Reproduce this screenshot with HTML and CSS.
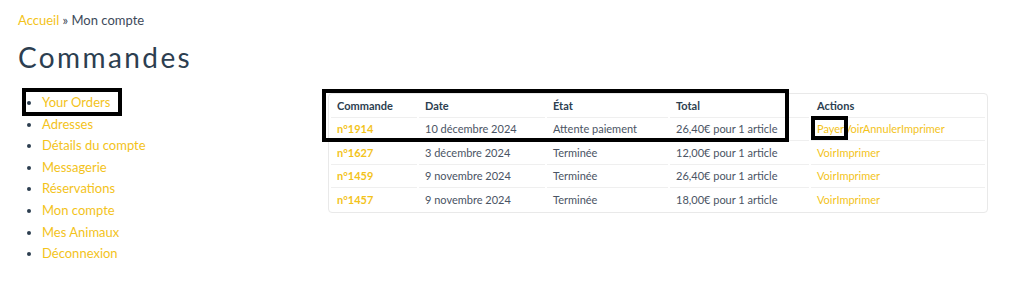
FILE: index.html
```html
<!DOCTYPE html>
<html lang="fr">
<head>
<meta charset="utf-8">
<title>Commandes</title>
<link rel="stylesheet" href="styles.css">
</head>
<body>
<div class="page">
  <div class="breadcrumb"><a href="#">Accueil</a> » Mon compte</div>
  <h1 class="title">Commandes</h1>
  <div class="content">
    <nav class="sidebar">
      <ul class="menu">
        <li class="menu-item active"><a href="#">Your Orders</a><span class="mark mark-orders"></span></li>
        <li class="menu-item"><a href="#">Adresses</a></li>
        <li class="menu-item"><a href="#">Détails du compte</a></li>
        <li class="menu-item"><a href="#">Messagerie</a></li>
        <li class="menu-item"><a href="#">Réservations</a></li>
        <li class="menu-item"><a href="#">Mon compte</a></li>
        <li class="menu-item"><a href="#">Mes Animaux</a></li>
        <li class="menu-item"><a href="#">Déconnexion</a></li>
      </ul>
    </nav>
    <main class="main">
      <div class="table-wrap">
        <table class="orders">
          <thead>
            <tr>
              <th class="c-num">Commande</th>
              <th class="c-date">Date</th>
              <th class="c-state">État</th>
              <th class="c-total">Total</th>
              <th class="c-actions">Actions</th>
            </tr>
          </thead>
          <tbody>
            <tr>
              <td><a class="num" href="#">n°1914</a></td>
              <td>10 décembre 2024</td>
              <td>Attente paiement</td>
              <td>26,40€ pour 1 article</td>
              <td class="actions"><a href="#">Payer</a><a href="#">Voir</a><a href="#">Annuler</a><a href="#">Imprimer</a></td>
            </tr>
            <tr>
              <td><a class="num" href="#">n°1627</a></td>
              <td>3 décembre 2024</td>
              <td>Terminée</td>
              <td>12,00€ pour 1 article</td>
              <td class="actions"><a href="#">Voir</a><a href="#">Imprimer</a></td>
            </tr>
            <tr>
              <td><a class="num" href="#">n°1459</a></td>
              <td>9 novembre 2024</td>
              <td>Terminée</td>
              <td>26,40€ pour 1 article</td>
              <td class="actions"><a href="#">Voir</a><a href="#">Imprimer</a></td>
            </tr>
            <tr>
              <td><a class="num" href="#">n°1457</a></td>
              <td>9 novembre 2024</td>
              <td>Terminée</td>
              <td>18,00€ pour 1 article</td>
              <td class="actions"><a href="#">Voir</a><a href="#">Imprimer</a></td>
            </tr>
          </tbody>
        </table>
        <span class="mark mark-row"></span>
        <span class="mark mark-pay"></span>
      </div>
    </main>
  </div>
</div>
</body>
</html>
```

FILE: styles.css
```css
* { box-sizing: border-box; }
html, body { margin: 0; padding: 0; background: #ffffff; }
body {
  font-family: Lato, "Noto Sans", "Liberation Sans", sans-serif;
  color: #2c3e50;
  font-size: 13px;
}
a { color: #f3c31b; text-decoration: none; }

.page { padding: 12px 18px 0 18px; }

.breadcrumb {
  line-height: 16px;
  font-size: 13px;
  color: #3d4a5a;
}

.title {
  margin: 11px 0 0 0;
  font-size: 28px;
  line-height: 36px;
  letter-spacing: 2.4px;
  font-weight: 400;
  color: #2c3e50;
}

.content {
  display: flex;
  margin-top: 15px;
}

.sidebar { width: 310px; flex: none; }

.menu {
  margin: 2px 0 0 0;
  padding: 0 0 0 24px;
  list-style: disc;
  color: #2c3e50;
}
.menu-item {
  line-height: 21.6px;
  font-size: 13px;
  position: relative;
}

.main { width: 660px; flex: none; padding-top: 3px; }

.table-wrap { position: relative; }

.orders {
  width: 660px;
  border: 1px solid #e9e9e9;
  border-radius: 4px;
  border-collapse: separate;
  border-spacing: 2px 0;
  table-layout: fixed;
  font-size: 11px;
  color: #4a5464;
}
.orders th, .orders td {
  text-align: left;
  height: 23.5px;
  padding: 0 0 0 6px;
  border-bottom: 1px solid #efefef;
  white-space: nowrap;
  vertical-align: middle;
}
.orders tbody tr:last-child td { border-bottom: none; }
.orders th { font-weight: 700; color: #2c3e50; }
.c-num { width: 86px; }
.c-date { width: 126px; }
.c-state { width: 121px; }
.c-total { width: 139px; }
.c-actions { width: auto; }

.num { font-weight: 700; }

.mark {
  position: absolute;
  border: 4px solid #000000;
  pointer-events: none;
}
.mark-orders { left: -20px; top: -4px; width: 100px; height: 28px; }
.mark-row { left: -6px; top: -4px; width: 467px; height: 53px; }
.mark-pay { left: 483px; top: 23px; width: 37px; height: 24px; }
```
